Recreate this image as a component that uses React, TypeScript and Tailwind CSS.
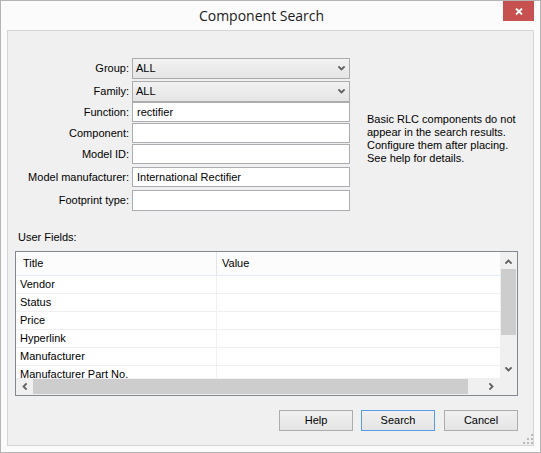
import React from "react";

const Chevron = ({ dir }: { dir: "down" | "up" | "left" | "right" }) => {
  const pts: Record<string, string> = {
    down: "1,1 3.5,3.5 6,1",
    up: "1,4 3.5,1.5 6,4",
    left: "4,1 1.5,3.5 4,6",
    right: "1,1 3.5,3.5 1,6",
  };
  const vertical = dir === "down" || dir === "up";
  return (
    <svg
      width={vertical ? 7 : 5}
      height={vertical ? 5 : 7}
      viewBox={vertical ? "0 0 7 5" : "0 0 5 7"}
      className="block"
    >
      <polyline points={pts[dir]} fill="none" stroke="#606060" strokeWidth="1.8" strokeLinecap="square" />
    </svg>
  );
};

type Field = { label: string; kind: "combo" | "input"; value: string; cls: string };

const fields: Field[] = [
  { label: "Group:", kind: "combo", value: "ALL", cls: "mt-0 h-[21px]" },
  { label: "Family:", kind: "combo", value: "ALL", cls: "mt-[2px] h-[21px]" },
  { label: "Function:", kind: "input", value: "rectifier", cls: "mt-0 h-[20px]" },
  { label: "Component:", kind: "input", value: "", cls: "mt-[1px] h-[20px]" },
  { label: "Model ID:", kind: "input", value: "", cls: "mt-[1px] h-[20px]" },
  { label: "Model manufacturer:", kind: "input", value: "International Rectifier", cls: "mt-[3px] h-[20px]" },
  { label: "Footprint type:", kind: "input", value: "", cls: "mt-[3px] h-[21px]" },
];

const rows = ["Vendor", "Status", "Price", "Hyperlink", "Manufacturer", "Manufacturer Part No."];

export default function App() {
  return (
    <div className="w-[541px] h-[453px] bg-[#fbfbfb] border border-[#b4b4b4] flex flex-col font-['Liberation_Sans',Arial,sans-serif] text-[11px] text-black leading-[13px] overflow-hidden">
      {/* Title bar */}
      <div className="h-[29px] flex shrink-0">
        <div className="flex-1 flex items-center justify-center pl-[19px] pb-[1px] font-['Open_Sans',sans-serif] text-[14px] text-[#1a1a1a]">
          Component Search
        </div>
        <div className="w-[31px] h-[20px] mr-[6px] bg-[#c75050] flex items-center justify-center">
          <svg width="8" height="7" viewBox="0 0 8 7" className="block">
            <path d="M1 0.5 L7 6.5 M7 0.5 L1 6.5" stroke="#ffffff" strokeWidth="1.8" />
          </svg>
        </div>
      </div>

      {/* Client area */}
      <div className="relative mx-[6px] mb-[6px] flex-1 border border-[#d5d5d5] bg-[#f0f0f0] flex flex-col pt-[27px]">
        {/* Form */}
        <div className="flex">
          <div className="flex flex-col">
            {fields.map((f) => (
              <div key={f.label} className={`flex items-center ${f.cls}`}>
                <div className="w-[121px] text-right whitespace-nowrap">{f.label}</div>
                {f.kind === "combo" ? (
                  <div className="ml-[3px] w-[218px] h-full border border-[#acacac] bg-gradient-to-b from-[#f2f2f2] to-[#e5e5e5] flex items-center pl-[3px] pr-[4px]">
                    <span className="flex-1">{f.value}</span>
                    <Chevron dir="down" />
                  </div>
                ) : (
                  <div className="ml-[3px] w-[218px] h-full border border-[#abadb3] bg-white flex items-center pl-[4px]">
                    {f.value}
                  </div>
                )}
              </div>
            ))}
          </div>
          <div className="ml-[17px] mt-[55px] w-[150px]">
            Basic RLC components do not
            <br />
            appear in the search results.
            <br />
            Configure them after placing.
            <br />
            See help for details.
          </div>
        </div>

        {/* User fields */}
        <div className="mt-[20px] pl-[10px] h-[13px]">User Fields:</div>
        <div className="mt-[7px] ml-[7px] w-[503px] h-[145px] border border-[#828790] bg-white flex flex-col">
          <div className="flex h-[126px]">
            <div className="w-[484px] overflow-hidden">
              <div className="h-[24px] flex bg-[#fcfcfc] border-b border-[#e3ecf5]">
                <div className="w-[201px] border-r border-[#e5e5e5] pl-[7px] flex items-center">Title</div>
                <div className="flex-1 pl-[5px] flex items-center">Value</div>
              </div>
              {rows.map((r) => (
                <div key={r} className="h-[18px] flex border-b border-[#f0f0f0] shrink-0">
                  <div className="w-[201px] border-r border-[#f0f0f0] pl-[4px] flex items-center whitespace-nowrap">{r}</div>
                  <div className="flex-1" />
                </div>
              ))}
            </div>
            <div className="w-[17px] bg-[#f0f0f0] flex flex-col">
              <div className="h-[17px] flex items-center justify-center pt-[1px]">
                <Chevron dir="up" />
              </div>
              <div className="mx-[1px] h-[66px] bg-[#cdcdcd]" />
              <div className="flex-1" />
              <div className="h-[17px] flex items-center justify-center">
                <Chevron dir="down" />
              </div>
            </div>
          </div>
          <div className="flex h-[17px]">
            <div className="w-[484px] bg-[#f0f0f0] flex">
              <div className="w-[17px] flex items-center justify-center">
                <Chevron dir="left" />
              </div>
              <div className="my-[1px] w-[435px] bg-[#cdcdcd]" />
              <div className="flex-1" />
              <div className="w-[17px] flex items-center justify-center">
                <Chevron dir="right" />
              </div>
            </div>
            <div className="w-[17px] bg-[#f0f0f0]" />
          </div>
        </div>

        {/* Buttons */}
        <div className="mt-[14px] flex justify-end pr-[15px]">
          <button className="w-[74px] h-[21px] border border-[#adadad] bg-gradient-to-b from-[#f0f0f0] to-[#e5e5e5] flex items-center justify-center">
            Help
          </button>
          <button className="ml-[8px] w-[74px] h-[21px] border border-[#569de5] bg-gradient-to-b from-[#f0f0f0] to-[#e5e5e5] flex items-center justify-center">
            Search
          </button>
          <button className="ml-[9px] w-[74px] h-[21px] border border-[#adadad] bg-gradient-to-b from-[#f0f0f0] to-[#e5e5e5] flex items-center justify-center">
            Cancel
          </button>
        </div>

        {/* Size grip */}
        <svg width="10" height="10" viewBox="0 0 10 10" className="absolute right-0 bottom-[1px] block">
          <rect x="8" y="0" width="2" height="2" fill="#b9b9b9" />
          <rect x="4" y="4" width="2" height="2" fill="#b9b9b9" />
          <rect x="8" y="4" width="2" height="2" fill="#b9b9b9" />
          <rect x="0" y="8" width="2" height="2" fill="#b9b9b9" />
          <rect x="4" y="8" width="2" height="2" fill="#b9b9b9" />
          <rect x="8" y="8" width="2" height="2" fill="#b9b9b9" />
        </svg>
      </div>
    </div>
  );
}
